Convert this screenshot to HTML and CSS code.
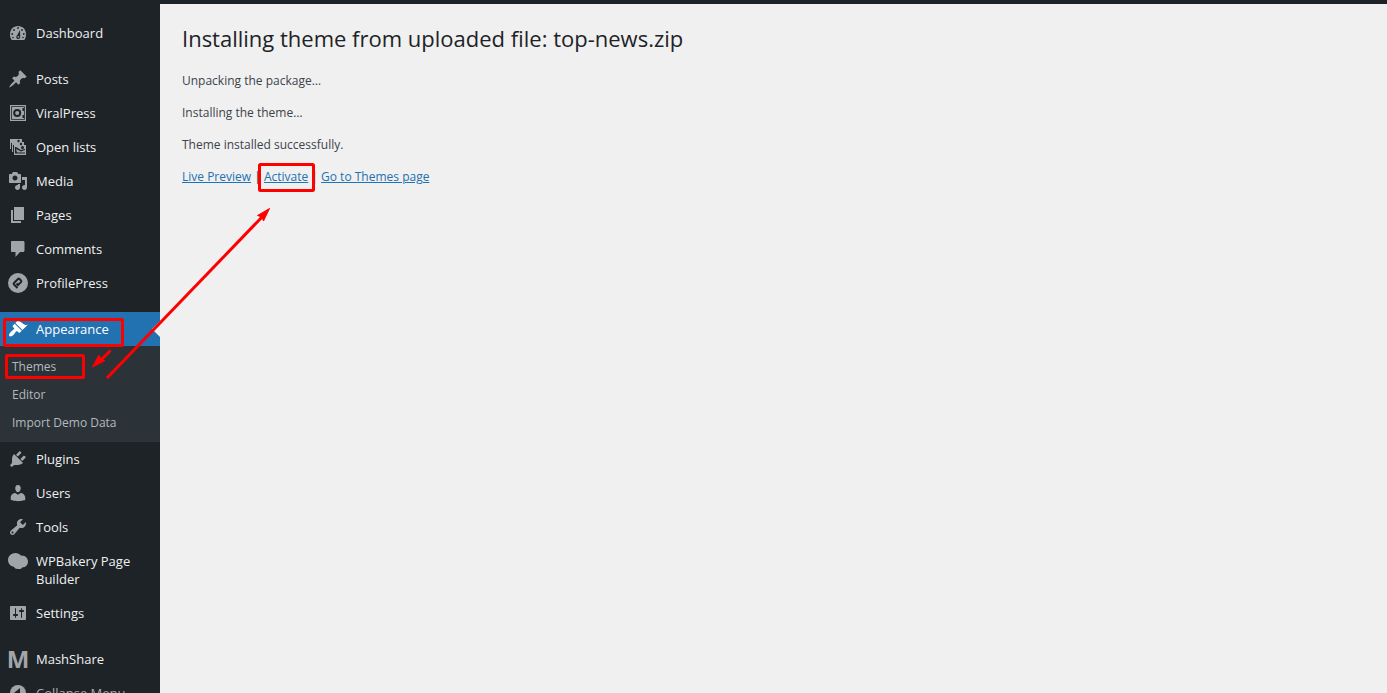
FILE: index.html
```html
<!DOCTYPE html>
<html lang="en">
<head>
    <meta charset="UTF-8">
    <meta name="viewport" content="width=device-width, initial-scale=1.0">
    <title>Installing theme</title>
    <link rel="stylesheet" href="styles.css">
</head>
<body>

<div class="admin">
    <nav class="menu" aria-label="Main menu">
        <a class="item" href="#">
            <svg class="icon" viewBox="0 0 20 20"><path d="M3.76 17h12.48c1.34-1.63 1.76-3.77 1.76-6 0-4.42-3.58-8-8-8s-8 3.58-8 8c0 2.23.42 4.37 1.76 6z"/><g class="cut"><circle cx="10" cy="5" r=".9"/><circle cx="6" cy="7" r=".9"/><circle cx="14" cy="7" r=".9"/><circle cx="4.2" cy="11" r=".9"/><circle cx="15.8" cy="11" r=".9"/><circle cx="5" cy="14.5" r=".8"/><circle cx="15" cy="14.5" r=".8"/><path d="M12 7l.2 6.500a2 2 0 1 1-3-1.200z"/></g><circle cx="10.300" cy="13.800" r=".9"/></svg>
            <span>Dashboard</span>
        </a>
        <div class="separator"></div>
        <a class="item" href="#">
            <svg class="icon" viewBox="0 0 20 20"><path d="M10.44 3.02l1.82-1.82 6.36 6.35-1.83 1.82c-1.05-.68-2.48-.57-3.41.36l-.75.75c-.92.93-1.04 2.35-.35 3.41l-1.83 1.82-2.41-2.41-2.8 2.79c-.42.42-3.38 2.71-3.8 2.29s1.860-3.390 2.280-3.810l2.790-2.790L4.100 9.360l1.830-1.820c1.050.69 2.480.57 3.400-.36l.75-.75c.93-.92 1.050-2.350.36-3.410z"/></svg>
            <span>Posts</span>
        </a>
        <a class="item" href="#">
            <svg class="icon" viewBox="0 0 20 20"><path fill-rule="evenodd" d="M2 2h16v16H2zM3.200 3.200v13.600h13.600V3.200zM4 4h12v12H4z"/><g class="cut"><circle cx="9.200" cy="10" r="4"/><path d="M14.500 5h1.500v3h-1.500zM14.500 12h1.500v3h-1.500z"/></g><circle cx="9.200" cy="10" r="2"/></svg>
            <span>ViralPress</span>
        </a>
        <a class="item" href="#">
            <svg class="icon" viewBox="0 0 20 20"><path d="M2 2h12v3h2v3h2v10H6v-3H4v-3H2z"/><g class="cut"><path d="M3 6h1v6H3zM5 8h1v7H5zM7 10h1l5 3 4-1v1l-4 1.500-5-2.500 1 3.500h8v1H7z"/><circle cx="10.500" cy="4" r="1.200"/><circle cx="13" cy="7" r="1.200"/><circle cx="14.500" cy="10.500" r="1.500"/></g></svg>
            <span>Open lists</span>
        </a>
        <a class="item" href="#">
            <svg class="icon" viewBox="0 0 20 20"><path d="M13 11V4c0-.55-.45-1-1-1h-1.67L9 1H5L3.670 3H2c-.55 0-1 .45-1 1v7c0 .55.45 1 1 1h10c.55 0 1-.45 1-1zM7 4.500c1.380 0 2.500 1.120 2.500 2.500S8.380 9.500 7 9.500 4.500 8.380 4.500 7 5.620 4.500 7 4.500zM14 6h5v10.500c0 1.380-1.120 2.500-2.500 2.500S14 17.880 14 16.500s1.120-2.500 2.500-2.500c.17 0 .34.02.5.05V9h-3V6zm-4 8.050V13h2v3.500c0 1.380-1.120 2.500-2.500 2.500S7 17.880 7 16.500 8.120 14 9.500 14c.17 0 .34.02.5.05z"/></svg>
            <span>Media</span>
        </a>
        <a class="item" href="#">
            <svg class="icon" viewBox="0 0 20 20"><path d="M6 15V2h10v13H6zm-1 1h8v2H3V5h2v11z"/></svg>
            <span>Pages</span>
        </a>
        <a class="item" href="#">
            <svg class="icon" viewBox="0 0 20 20"><path d="M4 2h11c.6 0 1.500.4 1.500 1.200v8.300c0 .9-.6 1.500-1.500 1.500h-3l-4.500 5v-5H4c-.6 0-1-.4-1-1V3c0-.6.4-1 1-1z"/></svg>
            <span>Comments</span>
        </a>
        <a class="item" href="#">
            <svg class="icon" viewBox="0 0 20 20"><circle cx="10" cy="10" r="10"/><path class="line" d="M9.500 15L6 11.500c-.5-.5-.5-1 0-1.500l4-4c.5-.5 1-.5 1.500 0l1.500 1.500c.6.600.6 1 0 1.600L10 12 8.500 10.500"/></svg>
            <span>ProfilePress</span>
        </a>
        <div class="separator"></div>
        <a class="item current" href="#">
            <svg class="icon" viewBox="0 0 20 20"><path d="M14.480 11.060L7.410 3.990l1.500-1.500c.5-.56 2.300-.47 3.510.32 1.210.8 1.430 1.280 2.910 2.100 1.180.64 2.450 1.260 4.450.85zm-.71.71L6.700 4.700 4.930 6.470c-.39.39-.39 1.020 0 1.410l1.060 1.060c.39.39.39 1.030 0 1.420-.6.6-1.430 1.110-2.210 1.690-.35.26-.7.53-1.010.84C1.430 14.230.4 16.080 1.400 17.070c.99 1 2.840-.03 4.180-1.360.31-.31.58-.66.85-1.020.57-.78 1.080-1.610 1.690-2.210.39-.39 1.020-.39 1.410 0l1.060 1.060c.39.39 1.020.39 1.410 0z"/></svg>
            <span>Appearance</span>
        </a>
        <div class="submenu">
            <a href="#">Themes</a>
            <a href="#">Editor</a>
            <a href="#">Import Demo Data</a>
        </div>
        <a class="item" href="#">
            <svg class="icon" viewBox="0 0 20 20"><path d="M13.110 4.360L9.870 7.600 8 5.730l3.240-3.240c.35-.34 1.050-.2 1.560.32.52.51.66 1.210.31 1.550zm-8 1.770l.91-1.120 9.010 9.010-1.190.84c-.71.71-2.630 1.160-3.820 1.160H6.140L4.900 17.260c-.59.59-1.540.59-2.120 0-.59-.58-.59-1.530 0-2.120l1.240-1.240v-3.880c0-1.130.4-3.190 1.090-3.890zm7.260 3.970l3.240-3.240c.34-.35 1.040-.21 1.550.31.52.51.66 1.210.31 1.550l-3.240 3.250z"/></svg>
            <span>Plugins</span>
        </a>
        <a class="item" href="#">
            <svg class="icon" viewBox="0 0 20 20"><path d="M10 9.250c-2.270 0-2.730-3.440-2.730-3.440C7 4.020 7.820 2 9.970 2c2.160 0 2.980 2.020 2.710 3.810 0 0-.41 3.440-2.680 3.440zm0 2.570L12.720 10c2.390 0 4.520 2.330 4.520 4.530v2.490s-3.650 1.130-7.240 1.130c-3.650 0-7.240-1.130-7.240-1.130v-2.490c0-2.250 1.940-4.480 4.470-4.480z"/></svg>
            <span>Users</span>
        </a>
        <a class="item" href="#">
            <svg class="icon" viewBox="0 0 20 20"><path d="M16.680 9.770c-1.340 1.340-3.300 1.670-4.950.99l-5.410 6.520c-.99.99-2.590.99-3.580 0s-.99-2.590 0-3.570l6.520-5.420c-.68-1.650-.35-3.610.99-4.950 1.280-1.280 3.120-1.620 4.720-1.060l-2.890 2.890 2.820 2.820 2.860-2.870c.53 1.580.18 3.390-1.080 4.650zM3.810 16.210c.4.39 1.040.39 1.430 0 .4-.4.4-1.040 0-1.430-.39-.4-1.030-.4-1.430 0-.39.39-.39 1.030 0 1.430z"/></svg>
            <span>Tools</span>
        </a>
        <a class="item" href="#">
            <svg class="icon" viewBox="0 0 20 20"><path d="M7.500 2c2.200 0 4.200 1 5.300 2.500C17 4 20 7 20 10.500c0 4-3 6-5.500 5.800-1 1.700-2.500 1.900-4.500 1.700-2 .1-3.500-.6-4-2.200C2.500 15.500 0 12.500 0 9c0-4 3.500-7 7.500-7z"/></svg>
            <span>WPBakery Page Builder</span>
        </a>
        <a class="item" href="#">
            <svg class="icon" viewBox="0 0 20 20"><path d="M18 16V4c0-.55-.45-1-1-1H3c-.55 0-1 .45-1 1v12c0 .55.45 1 1 1h14c.55 0 1-.45 1-1zM8 11h1c.55 0 1 .45 1 1s-.45 1-1 1H8v1.500c0 .28-.22.5-.5.5s-.5-.22-.5-.5V13H6c-.55 0-1-.45-1-1s.45-1 1-1h1V5.500c0-.28.22-.5.5-.5s.5.22.5.5V11zm5-2h-1c-.55 0-1-.45-1-1s.45-1 1-1h1V5.500c0-.28.22-.5.5-.5s.5.22.5.5V7h1c.55 0 1 .45 1 1s-.45 1-1 1h-1v5.500c0 .28-.22.5-.5.5s-.5-.22-.5-.5V9z"/></svg>
            <span>Settings</span>
        </a>
        <div class="separator"></div>
        <a class="item" href="#">
            <span class="icon letter" aria-hidden="true">M</span>
            <span>MashShare</span>
        </a>
        <button class="item collapse" type="button">
            <svg class="icon" viewBox="0 0 20 20"><circle cx="10" cy="10" r="8"/><path class="cut" d="M12 5v10l-6-5z"/></svg>
            <span>Collapse Menu</span>
        </button>
    </nav>

    <main class="content">
        <h1>Installing theme from uploaded file: top-news.zip</h1>
        <p>Unpacking the package…</p>
        <p>Installing the theme…</p>
        <p>Theme installed successfully.</p>
        <p><a href="#">Live Preview</a> | <a href="#">Activate</a> | <a href="#">Go to Themes page</a></p>
    </main>

    <!-- red marks and arrows over the page -->
    <svg class="marks" width="330" height="400" viewBox="0 0 330 400" aria-hidden="true">
        <rect x="4.500" y="319.500" width="118" height="26" rx="1"/>
        <rect x="6.500" y="355.500" width="77" height="22" rx="1"/>
        <rect x="259.500" y="164.500" width="54" height="26" rx="1"/>
        <path d="M110.500 350.500L100 361M107 378L263 216"/>
        <path class="head" d="M92.500 367l6.500-12 2 4.500 4 1z"/>
        <path class="head" d="M269.500 208.500l-12 7 4.500 1.500 1.500 4z"/>
    </svg>
</div>

</body>
</html>
```

FILE: styles.css
```css
* {
    box-sizing: border-box;
}
body {
    margin: 0;
    background-color: #f0f0f0;
    color: #3c434a;
    font-family: "Open Sans", "Noto Sans", sans-serif;
    font-size: 12px;
}
.admin {
    position: relative;
    display: flex;
    height: 100vh;
    overflow: hidden;
}
.menu {
    flex: none;
    width: 160px;
    padding-top: 16px;
    background-color: #1d2327;
}
.item {
    position: relative;
    display: flex;
    align-items: flex-start;
    gap: 8px;
    width: 100%;
    padding: 8px;
    border: none;
    background: none;
    color: #f0f0f1;
    font-family: inherit;
    font-size: 13px;
    line-height: 18px;
    text-align: left;
    text-decoration: none;
    cursor: pointer;
}
.icon {
    flex: none;
    width: 20px;
    height: 20px;
    margin: -1px 0;
    fill: #a0a5aa;
}
.cut {
    fill: #1d2327;
}
.line {
    fill: none;
    stroke: #1d2327;
    stroke-width: 2;
}
.letter {
    display: flex;
    justify-content: center;
    color: #a0a5aa;
    font-size: 24px;
    font-weight: 700;
    line-height: 20px;
}
.separator {
    height: 12px;
}
.current {
    background-color: #2271b1;
    color: #fff;
}
.current .icon {
    fill: #fff;
}
.current::after {
    content: "";
    position: absolute;
    top: 9px;
    right: 0;
    border: 8px solid transparent;
    border-left: none;
    border-right-color: #f0f0f0;
}
.submenu {
    padding: 7px 0 5px;
    background-color: #2c3338;
}
.submenu a {
    display: block;
    padding: 5px 12px;
    color: #b4b9be;
    line-height: 18px;
    text-decoration: none;
}
.collapse {
    color: #a7aaad;
}
.content {
    flex: 1;
    padding: 19px 22px;
    border-top: 4px solid #1d2327;
}
h1 {
    margin: 0 0 18px;
    color: #1d2327;
    font-size: 22px;
    font-weight: 400;
    line-height: 30px;
}
p {
    margin: 0 0 12px;
    line-height: 20px;
}
p a {
    color: #2271b1;
}
.marks {
    position: absolute;
    top: 0;
    left: 0;
    pointer-events: none;
    fill: none;
    stroke: #f00;
    stroke-width: 3;
}
.head {
    fill: #f00;
    stroke-width: 1;
}
```
